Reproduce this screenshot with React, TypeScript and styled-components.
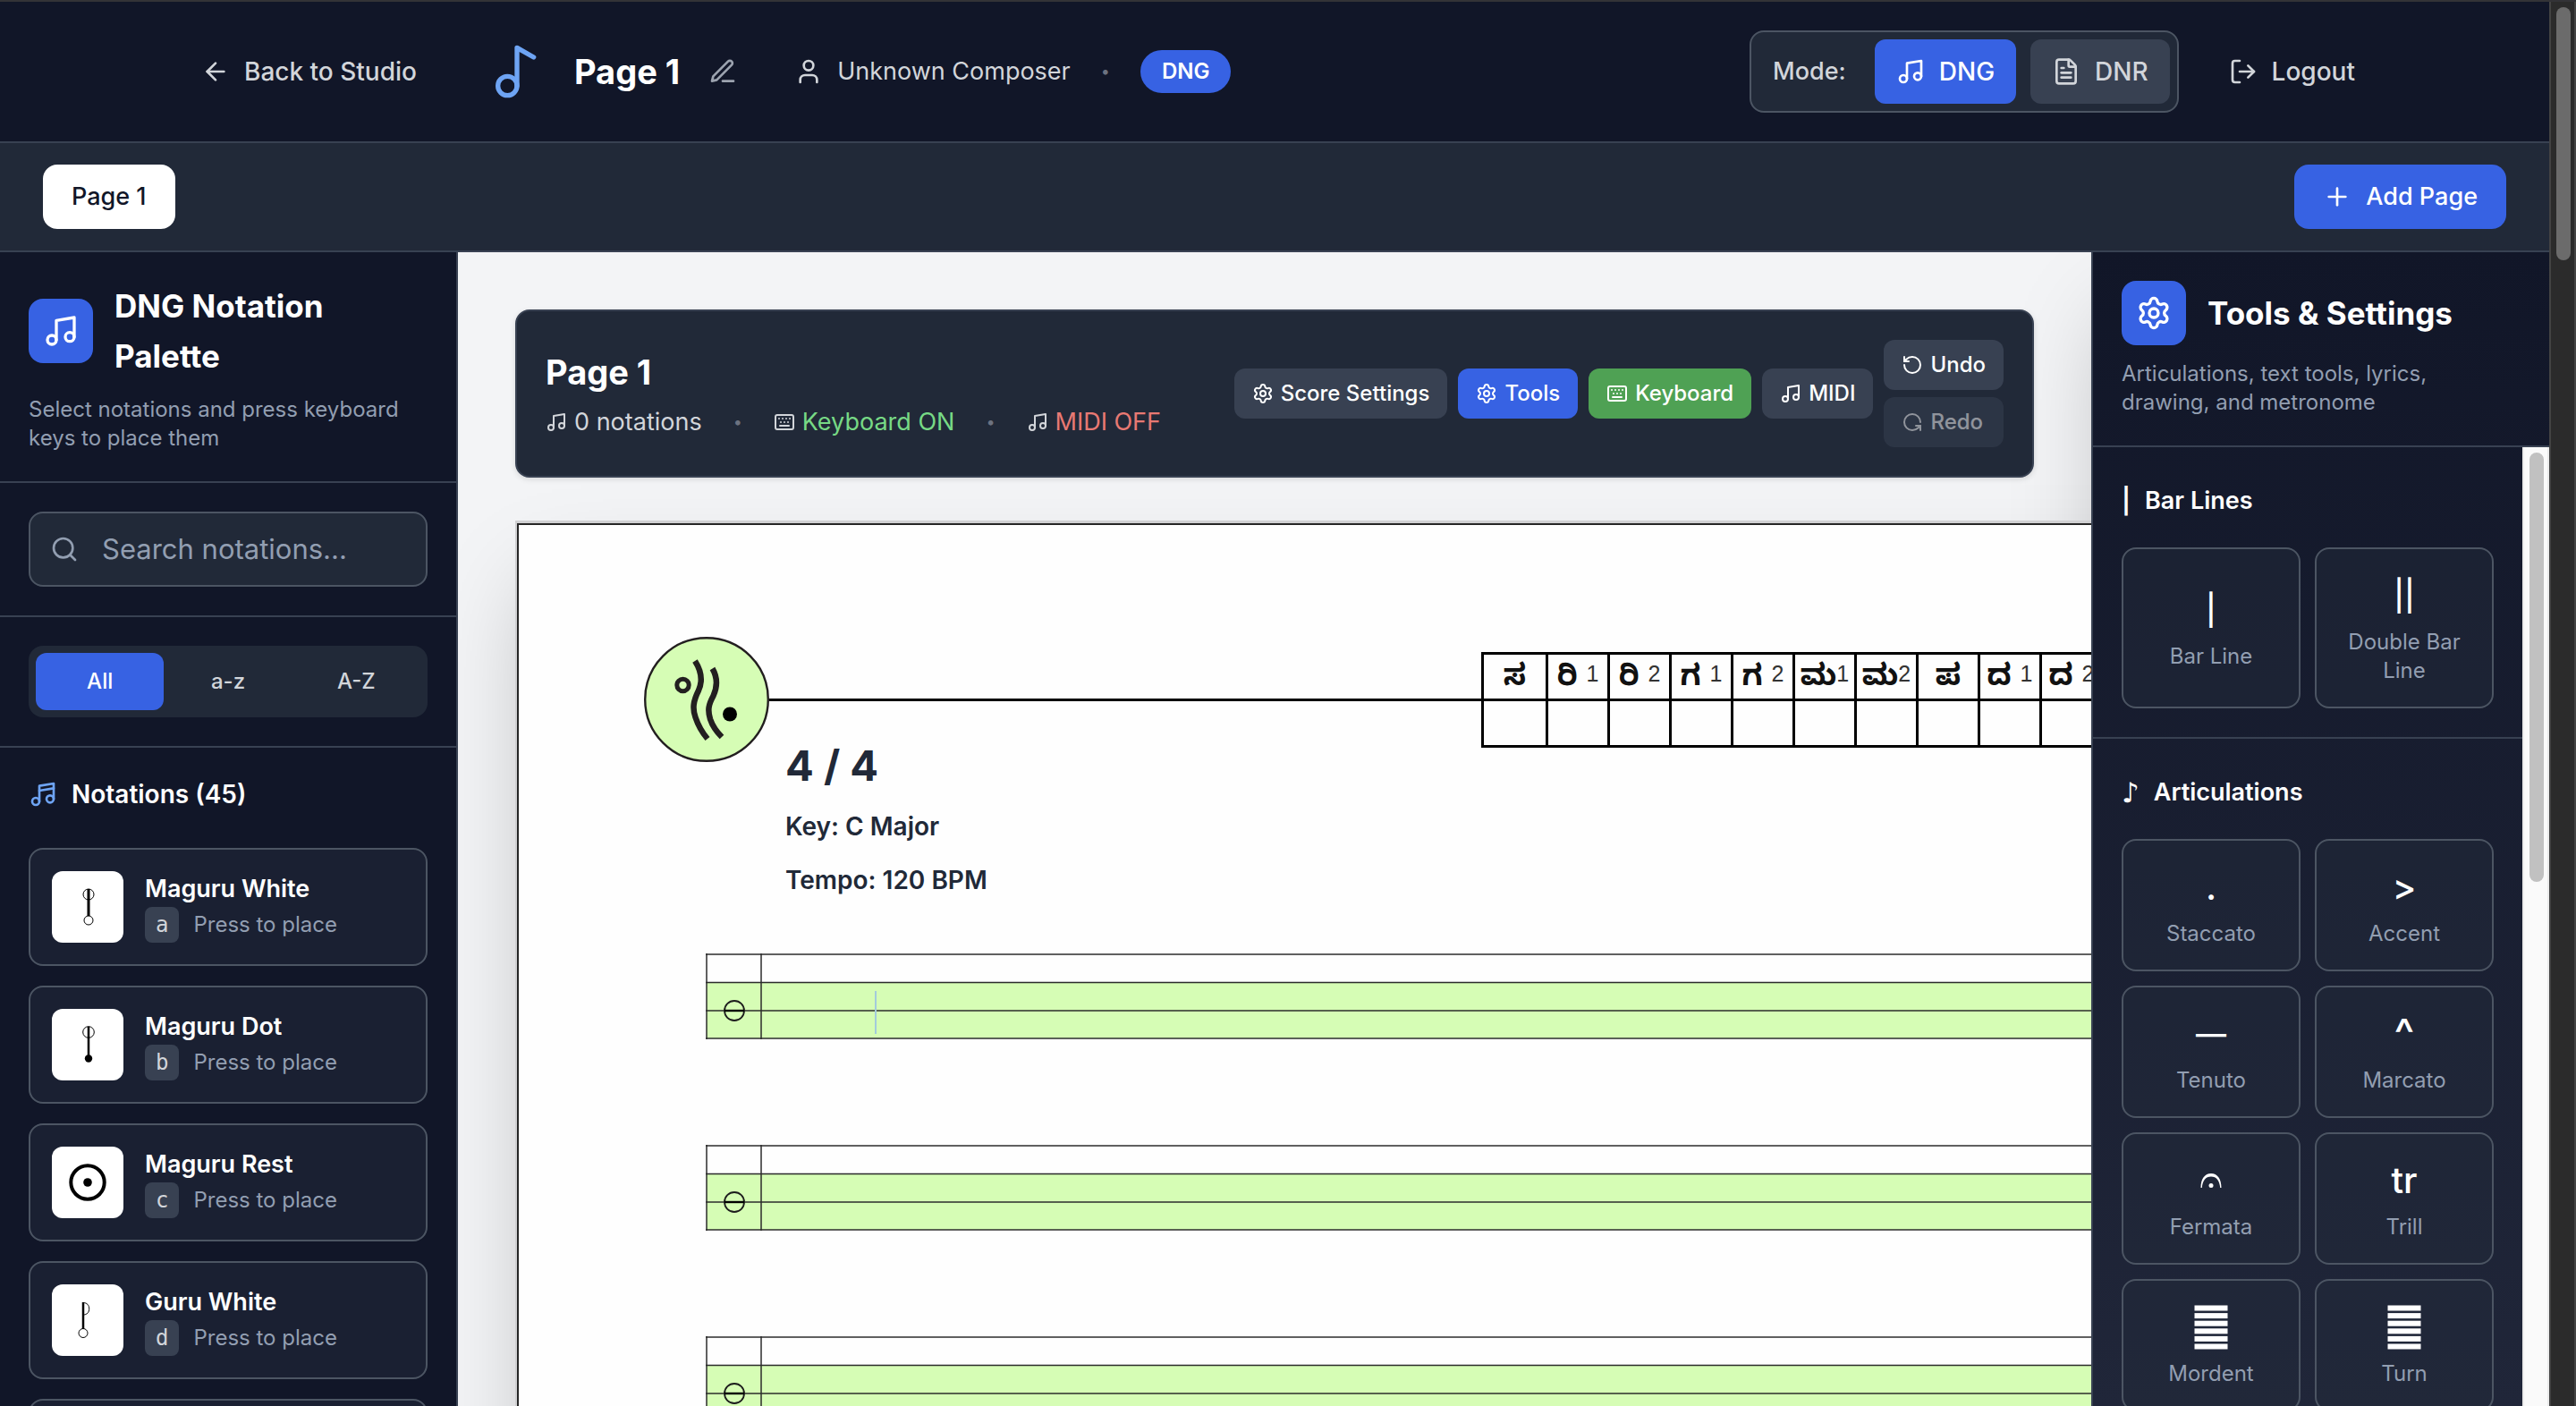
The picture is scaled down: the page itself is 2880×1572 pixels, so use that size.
import React from "react";
import styled, { createGlobalStyle, css } from "styled-components";
import {
  ArrowLeft,
  FileText,
  Keyboard,
  LogOut,
  Music,
  Music2,
  Music4,
  Plus,
  RotateCcw,
  Search,
  Settings,
  User,
} from "lucide-react";

const c = {
  night: "#111628",
  slate: "#212938",
  slateLight: "#384152",
  line: "#384152",
  outline: "#4c5563",
  blue: "#3762e3",
  sky: "#6ea4f4",
  green: "#4fa154",
  mint: "#77d985",
  coral: "#e87973",
  text: "#d2d5da",
  muted: "#9ca3af",
  mutedBlue: "#929eb1",
  faint: "#6c7280",
  white: "#ffffff",
  ink: "#212938",
  leaf: "#d6fdb5",
};

const GlobalStyle = createGlobalStyle`
  * { box-sizing: border-box; }
  body {
    margin: 0;
    background: ${c.night};
    font-family: Inter, "Noto Sans", sans-serif;
    font-size: 28px;
    line-height: 40px;
    color: ${c.white};
    -webkit-font-smoothing: antialiased;
  }
  h1, h2, h3, p { margin: 0; }
  button, input { font: inherit; color: inherit; }
  button { border: 0; background: none; padding: 0; cursor: pointer; }
  svg { flex: none; display: block; }
`;

const Window = styled.div`
  display: flex;
  height: 100vh;
  overflow: hidden;
  border-top: 2px solid #333337;
`;

const AppColumn = styled.div`
  flex: 1;
  min-width: 0;
  display: flex;
  flex-direction: column;
`;

const ScrollTrack = styled.div<{ $dark?: boolean }>`
  flex: none;
  width: 30px;
  padding: 6px;
  border: solid ${(p) => (p.$dark ? "#434343" : "#ebebeb")};
  border-width: 0 2px;
  background: ${(p) => (p.$dark ? "#2b2b2b" : "#fafafa")};
`;

const ScrollThumb = styled.div<{ $dark?: boolean; $size: number }>`
  width: 16px;
  height: ${(p) => p.$size}px;
  border-radius: 8px;
  background: ${(p) => (p.$dark ? "#6b6b6b" : "#c1c1c1")};
`;

/* ---------- header ---------- */

const Header = styled.header`
  border-bottom: 2px solid ${c.line};
`;

const HeaderInner = styled.div`
  display: flex;
  align-items: center;
  justify-content: space-between;
  max-width: 2560px;
  height: 156px;
  margin: 0 auto;
  padding: 0 56px 0 64px;
`;

const HeaderSide = styled.div<{ $gap: number }>`
  display: flex;
  align-items: center;
  gap: ${(p) => p.$gap}px;
`;

const GhostButton = styled.button`
  display: flex;
  align-items: center;
  gap: 16px;
  padding: 16px;
  font-weight: 500;
  color: ${c.text};
`;

const TitleGroup = styled.div`
  display: flex;
  align-items: center;
`;

const DocTitle = styled.h1`
  margin-left: 32px;
  font-size: 38px;
  line-height: 56px;
  font-weight: 700;
`;

const EditButton = styled.button`
  margin-left: 16px;
  padding: 16px;
  color: ${c.muted};
`;

const Byline = styled.div`
  display: flex;
  align-items: center;
  gap: 16px;
  font-size: 27px;
  color: ${c.text};
`;

const Dot = styled.span`
  font-size: 18px;
  color: ${c.faint};
`;

const Badge = styled.span`
  padding: 8px 24px;
  border-radius: 24px;
  background: ${c.blue};
  font-size: 24px;
  line-height: 32px;
  font-weight: 600;
`;

const BylineGroup = styled.div`
  display: flex;
  align-items: center;
  gap: 34px;
  margin-left: 48px;
`;

const ModeBox = styled.div`
  display: flex;
  align-items: center;
  gap: 16px;
  padding: 8px;
  border: 2px solid ${c.outline};
  border-radius: 16px;
  background: ${c.slate};
`;

const ModeLabel = styled.span`
  padding: 0 16px;
  font-size: 27px;
  font-weight: 500;
  color: ${c.text};
`;

const ModeButton = styled.button<{ $active?: boolean }>`
  display: flex;
  align-items: center;
  gap: 16px;
  padding: 16px 24px;
  border-radius: 12px;
  font-weight: 500;
  background: ${(p) => (p.$active ? c.blue : c.slateLight)};
  color: ${(p) => (p.$active ? c.white : c.text)};
`;

/* ---------- page tabs ---------- */

const TabBar = styled.nav`
  display: flex;
  justify-content: space-between;
  padding: 24px 48px;
  border-bottom: 2px solid ${c.line};
  background: ${c.slate};
`;

const TabButton = styled.button<{ $primary?: boolean }>`
  display: flex;
  align-items: center;
  gap: 16px;
  padding: 16px 32px;
  border-radius: 16px;
  font-size: 27px;
  font-weight: 500;
  background: ${(p) => (p.$primary ? c.blue : c.white)};
  color: ${(p) => (p.$primary ? c.white : c.night)};
`;

/* ---------- shared panel parts ---------- */

const Workspace = styled.div`
  flex: 1;
  min-height: 0;
  display: flex;
  overflow: hidden;
`;

const PanelHead = styled.div`
  padding: 32px;
  border-bottom: 2px solid ${c.line};
`;

const PanelTitleRow = styled.div`
  display: flex;
  align-items: center;
  gap: 24px;
  margin-bottom: 16px;
`;

const PanelIcon = styled.div`
  flex: none;
  padding: 16px;
  border-radius: 16px;
  background: ${c.blue};
`;

const PanelTitle = styled.h2`
  font-size: 35px;
  line-height: 56px;
  font-weight: 700;
`;

const PanelNote = styled.p`
  font-size: 24px;
  line-height: 32px;
  color: ${c.mutedBlue};
`;

/* ---------- left palette ---------- */

const Palette = styled.aside`
  flex: none;
  width: 512px;
  overflow: hidden;
  border-right: 2px solid ${c.line};
  background: ${c.night};
`;

const PaletteBlock = styled.div`
  padding: 32px;
  border-bottom: 2px solid ${c.line};
`;

const SearchBox = styled.label`
  display: flex;
  align-items: center;
  gap: 26px;
  height: 84px;
  padding: 0 22px;
  border: 2px solid ${c.outline};
  border-radius: 16px;
  background: ${c.slate};
  color: ${c.mutedBlue};
`;

const SearchInput = styled.input`
  flex: 1;
  min-width: 0;
  padding: 0;
  border: 0;
  outline: 0;
  background: none;
  font-size: 31px;
  color: ${c.white};
  &::placeholder { color: ${c.mutedBlue}; opacity: 1; }
`;

const Segments = styled.div`
  display: grid;
  grid-template-columns: repeat(3, 1fr);
  padding: 8px;
  border-radius: 16px;
  background: ${c.slate};
`;

const Segment = styled.button<{ $active?: boolean }>`
  padding: 16px 0;
  border-radius: 12px;
  font-size: 24px;
  line-height: 32px;
  font-weight: 500;
  color: ${(p) => (p.$active ? c.white : c.text)};
  background: ${(p) => (p.$active ? c.blue : "transparent")};
`;

const ListBlock = styled.div`
  padding: 32px;
`;

const ListTitle = styled.h3`
  display: flex;
  align-items: center;
  gap: 16px;
  margin-bottom: 40px;
  font-size: 28px;
  font-weight: 600;
  svg { color: ${c.sky}; }
`;

const NotationList = styled.div`
  display: flex;
  flex-direction: column;
  gap: 22px;
`;

const NotationCard = styled.button`
  display: flex;
  align-items: center;
  gap: 24px;
  padding: 24px;
  border: 2px solid ${c.outline};
  border-radius: 16px;
  background: #1a2032;
  text-align: left;
`;

const Thumb = styled.span`
  width: 80px;
  height: 80px;
  border-radius: 12px;
  background: ${c.white};
`;

const NotationName = styled.span`
  display: block;
  font-size: 27px;
  font-weight: 600;
`;

const NotationHint = styled.span`
  display: flex;
  align-items: center;
  gap: 16px;
  font-size: 24px;
  color: ${c.mutedBlue};
`;

const Key = styled.kbd`
  padding: 4px 12px;
  border-radius: 8px;
  background: ${c.slateLight};
  font-family: "DejaVu Sans Mono", monospace;
  font-size: 24px;
  line-height: 32px;
  color: ${c.text};
`;

/* ---------- score area ---------- */

const Stage = styled.main`
  flex: 1;
  min-width: 0;
  display: flex;
  flex-direction: column;
  gap: 48px;
  padding: 64px;
  overflow: hidden;
  background: #f3f4f6;
`;

const Toolbar = styled.section`
  position: relative;
  z-index: 1;
  display: flex;
  align-items: center;
  justify-content: space-between;
  padding: 32px;
  border: 2px solid ${c.line};
  border-radius: 16px;
  background: ${c.slate};
  box-shadow: 0 2px 6px rgba(0, 0, 0, 0.12);
`;

const ToolbarInfo = styled.div`
  display: flex;
  flex-direction: column;
  gap: 8px;
`;

const ToolbarTitle = styled.h2`
  font-size: 38px;
  line-height: 56px;
  font-weight: 700;
`;

const StatusRow = styled.div`
  display: flex;
  align-items: center;
  gap: 35px;
  font-size: 27px;
  color: ${c.text};
`;

const Status = styled.span`
  display: flex;
  align-items: center;
  gap: 8px;
`;

const StatusText = styled.span<{ $tone?: string }>`
  color: ${(p) => p.$tone ?? "inherit"};
`;

const ToolbarActions = styled.div`
  display: flex;
  align-items: center;
  gap: 12px;
`;

const History = styled.div`
  display: flex;
  flex-direction: column;
  gap: 8px;
`;

const ToolButton = styled.button<{ $tone?: string }>`
  display: flex;
  align-items: center;
  gap: 8px;
  padding: 12px 20px;
  border-radius: 12px;
  background: ${(p) => p.$tone ?? c.slateLight};
  font-size: 24px;
  line-height: 32px;
  font-weight: 500;
  white-space: nowrap;
  &:disabled { opacity: 0.5; color: ${c.white}; }
`;

const RedoIcon = styled(RotateCcw)`
  transform: rotate(180deg);
`;

const Paper = styled.section`
  position: relative;
  z-index: 1;
  flex: none;
  width: 2400px;
  min-height: 1800px;
  border: 2px solid #d0d0d2;
  border-top-width: 3px;
  background: #fefefe;
  box-shadow: 0 50px 100px -24px rgba(0, 0, 0, 0.25);
`;

const Sheet = styled.div`
  min-height: 1795px;
  padding: 125px 0 0 140px;
  border: 2px solid #262626;
  color: ${c.ink};
`;

const Masthead = styled.div`
  display: flex;
  align-items: center;
`;

const MastheadRule = styled.div`
  flex: none;
  width: 796px;
  height: 3px;
  background: #000;
`;

const SwaraTable = styled.table`
  border-collapse: collapse;
  color: #111;
  td {
    width: 69px;
    height: 52px;
    padding: 6px 0 0;
    border: 3px solid #000;
    text-align: center;
    white-space: nowrap;
    line-height: 32px;
  }
  td:first-child { width: 72px; }
`;

const Swara = styled.span`
  font-family: "Noto Sans Kannada", "Noto Sans", sans-serif;
  font-size: 33px;
  font-weight: 700;
`;

const SwaraIndex = styled.span<{ $tight?: boolean }>`
  margin-left: ${(p) => (p.$tight ? 0 : 10)}px;
  vertical-align: 4px;
  font-family: "Liberation Sans", Arial, sans-serif;
  font-size: 25px;
  line-height: 24px;
  color: #333;
`;

const ScoreMeta = styled.div`
  display: flex;
  flex-direction: column;
  gap: 20px;
  margin: -24px 0 62px 158px;
  font-weight: 600;
`;

const TimeSignature = styled.p`
  font-size: 47px;
  line-height: 56px;
  font-weight: 700;
`;

const Staves = styled.div`
  display: flex;
  flex-direction: column;
  gap: 118px;
  margin-left: 69px;
`;

const Staff = styled.div`
  position: relative;
  height: 96px;
`;

const Caret = styled.div`
  position: absolute;
  left: 189px;
  top: 42px;
  width: 2px;
  height: 48px;
  background: #a3cbdc;
`;

/* ---------- right tools ---------- */

const Tools = styled.aside`
  flex: none;
  width: 512px;
  display: flex;
  flex-direction: column;
  border-left: 2px solid ${c.line};
  background: linear-gradient(180deg, ${c.night}, #202639);
  box-shadow: 0 50px 100px -24px rgba(0, 0, 0, 0.25);
  z-index: 0;
`;

const ToolsBody = styled.div`
  flex: 1;
  min-height: 0;
  display: flex;
`;

const ToolsScroll = styled.div`
  flex: 1;
  overflow: hidden;
`;

const ToolSection = styled.section`
  padding: 32px;
  border-bottom: 2px solid ${c.line};
`;

const ToolSectionTitle = styled.h3`
  display: flex;
  align-items: center;
  gap: 16px;
  margin-bottom: 24px;
  font-size: 27px;
  line-height: 56px;
  font-weight: 600;
`;

const SectionGlyph = styled.span<{ $music?: boolean }>`
  font-size: 28px;
  ${(p) =>
    p.$music &&
    css`
      font-family: "DejaVu Sans", sans-serif;
      font-size: 31px;
    `}
`;

const ToolGrid = styled.div`
  display: grid;
  grid-template-columns: 1fr 1fr;
  gap: 16px;
`;

const ToolTile = styled.button`
  display: flex;
  flex-direction: column;
  align-items: center;
  justify-content: center;
  padding: 24px;
  border: 2px solid ${c.outline};
  border-radius: 16px;
  background: rgba(34, 41, 57, 0.5);
`;

const ToolGlyph = styled.span<{ $size?: number }>`
  display: flex;
  align-items: center;
  height: 56px;
  margin-bottom: 8px;
  font-size: ${(p) => p.$size ?? 40}px;
  line-height: 56px;
  font-weight: 500;
`;

const ToolLabel = styled.span`
  font-size: 24px;
  line-height: 32px;
  color: ${c.mutedBlue};
`;

/* ---------- drawings ---------- */

const PencilIcon = () => (
  <svg width="32" height="32" viewBox="0 0 24 24" fill="none" stroke="currentColor" strokeWidth="2" strokeLinecap="round" strokeLinejoin="round">
    <path d="M12 20h9" />
    <path d="M16.5 3.5a2.121 2.121 0 0 1 3 3L7 19l-4 1 1-4Z" />
  </svg>
);

const MaguruWhite = () => (
  <svg width="80" height="80" fill="none" stroke="#000">
    <circle cx="41" cy="26" r="6" strokeWidth="1" />
    <path d="M41 20V50" strokeWidth="3" />
    <circle cx="41" cy="55" r="5" strokeWidth="1" />
  </svg>
);

const MaguruDot = () => (
  <svg width="80" height="80" fill="none" stroke="#000">
    <circle cx="41" cy="26" r="6.3" strokeWidth="1" />
    <path d="M41 20V54" strokeWidth="2.5" />
    <circle cx="41" cy="55.5" r="4.2" fill="#000" stroke="none" />
  </svg>
);

const MaguruRest = () => (
  <svg width="80" height="80" fill="none" stroke="#000">
    <circle cx="40" cy="40" r="18.7" strokeWidth="4" />
    <circle cx="40" cy="40" r="4.8" fill="#000" stroke="none" />
  </svg>
);

const GuruWhite = () => (
  <svg width="80" height="80" fill="none" stroke="#000">
    <path d="M35 20V50" strokeWidth="2.5" />
    <path d="M35 20.5c4 0 6.7 2.6 6.7 6.8S39 34 35 34" strokeWidth="1" />
    <circle cx="35" cy="54.5" r="5" strokeWidth="1" />
  </svg>
);

const SheetLogo = () => (
  <svg width="140" height="140" viewBox="0 0 140 140" fill="none">
    <circle cx="70" cy="70" r="68.8" fill={c.leaf} stroke="#231f20" strokeWidth="2.4" />
    <path d="M57 27C64 38 65.5 50 61 60C55 72 54 80 57.5 90C60.5 99 65 107 71 114" stroke="#231f20" strokeWidth="6.5" />
    <path d="M76.5 35.5C82 45 82.5 55 77.5 66C72 76 71 82 74 92C77 101 81 106 87 112" stroke="#231f20" strokeWidth="6.5" />
    <circle cx="43.5" cy="54" r="6.7" stroke="#231f20" strokeWidth="5" />
    <circle cx="96" cy="86.5" r="8" fill="#000" />
  </svg>
);

const StaffDrawing = () => (
  <svg width="100%" height="96">
    <rect x="1" y="32" width="100%" height="63" fill={c.leaf} />
    <g stroke="#2b2b2b" strokeWidth="1.5">
      <line x1="0" x2="100%" y1="1" y2="1" />
      <line x1="0" x2="100%" y1="32.5" y2="32.5" />
      <line x1="0" x2="100%" y1="64" y2="64" />
      <line x1="0" x2="100%" y1="95" y2="95" />
      <line x1="1" x2="1" y1="0" y2="96" />
      <line x1="62" x2="62" y1="0" y2="96" />
    </g>
    <circle cx="32" cy="64" r="11" fill="none" stroke="#1d1d1d" strokeWidth="1.8" />
    <line x1="21" x2="43" y1="64" y2="64" stroke="#000" strokeWidth="2.4" />
  </svg>
);

const FermataGlyph = () => (
  <svg width="24" height="18" viewBox="0 0 24 18">
    <path d="M0.5 17C0.5 7 5 1 12 1s11.5 6 11.5 16h-1.3C21.5 9 18 4.5 12 4.5S2.5 9 1.8 17Z" fill="#fff" />
    <circle cx="12" cy="14.5" r="2.5" fill="#fff" />
  </svg>
);

const BarsGlyph = () => (
  <svg width="38" height="50" viewBox="0 0 38 50" fill="#fff">
    {[0, 1, 2, 3, 4, 5].map((i) => (
      <rect key={i} x="0.5" y={0.5 + i * 8.6} width="37" height="6" />
    ))}
  </svg>
);

/* ---------- data ---------- */

const notations = [
  { name: "Maguru White", key: "a", Art: MaguruWhite },
  { name: "Maguru Dot", key: "b", Art: MaguruDot },
  { name: "Maguru Rest", key: "c", Art: MaguruRest },
  { name: "Guru White", key: "d", Art: GuruWhite },
  { name: "Guru Dot", key: "e", Art: GuruWhite },
];

const swaras: { s: string; n?: string; tight?: boolean }[] = [
  { s: "ಸ" },
  { s: "ರಿ", n: "1" },
  { s: "ರಿ", n: "2" },
  { s: "ಗ", n: "1" },
  { s: "ಗ", n: "2" },
  { s: "ಮ", n: "1", tight: true },
  { s: "ಮ", n: "2", tight: true },
  { s: "ಪ" },
  { s: "ದ", n: "1" },
  { s: "ದ", n: "2" },
];

type Tile = { glyph: React.ReactNode; label: string; size?: number };

const barLines: Tile[] = [
  { glyph: "|", label: "Bar Line", size: 34 },
  { glyph: "||", label: "Double Bar Line", size: 34 },
];

const articulations: Tile[] = [
  { glyph: ".", label: "Staccato" },
  { glyph: ">", label: "Accent" },
  { glyph: "—", label: "Tenuto", size: 34 },
  { glyph: "^", label: "Marcato", size: 48 },
  { glyph: <FermataGlyph />, label: "Fermata" },
  { glyph: "tr", label: "Trill" },
  { glyph: <BarsGlyph />, label: "Mordent" },
  { glyph: <BarsGlyph />, label: "Turn" },
];

const Tiles = ({ items }: { items: Tile[] }) => (
  <ToolGrid>
    {items.map(({ glyph, label, size }) => (
      <ToolTile key={label}>
        <ToolGlyph $size={size}>{glyph}</ToolGlyph>
        <ToolLabel>{label}</ToolLabel>
      </ToolTile>
    ))}
  </ToolGrid>
);

export default function App() {
  return (
    <>
      <GlobalStyle />
      <Window>
        <AppColumn>
          <Header>
            <HeaderInner>
              <HeaderSide $gap={64}>
                <GhostButton>
                  <ArrowLeft size={32} />
                  Back to Studio
                </GhostButton>
                <TitleGroup>
                  <Music2 size={64} color={c.sky} />
                  <DocTitle>Page 1</DocTitle>
                  <EditButton aria-label="Edit title">
                    <PencilIcon />
                  </EditButton>
                  <BylineGroup>
                    <Byline>
                      <User size={32} />
                      Unknown Composer
                    </Byline>
                    <Dot>•</Dot>
                    <Badge>DNG</Badge>
                  </BylineGroup>
                </TitleGroup>
              </HeaderSide>
              <HeaderSide $gap={40}>
                <ModeBox>
                  <ModeLabel>Mode:</ModeLabel>
                  <ModeButton $active>
                    <Music size={32} />
                    DNG
                  </ModeButton>
                  <ModeButton>
                    <FileText size={32} />
                    DNR
                  </ModeButton>
                </ModeBox>
                <GhostButton>
                  <LogOut size={32} />
                  Logout
                </GhostButton>
              </HeaderSide>
            </HeaderInner>
          </Header>

          <TabBar>
            <TabButton>Page 1</TabButton>
            <TabButton $primary>
              <Plus size={32} />
              Add Page
            </TabButton>
          </TabBar>

          <Workspace>
            <Palette>
              <PanelHead>
                <PanelTitleRow>
                  <PanelIcon>
                    <Music size={40} />
                  </PanelIcon>
                  <PanelTitle>DNG Notation Palette</PanelTitle>
                </PanelTitleRow>
                <PanelNote>Select notations and press keyboard keys to place them</PanelNote>
              </PanelHead>
              <PaletteBlock>
                <SearchBox>
                  <Search size={32} />
                  <SearchInput type="text" aria-label="Search notations" placeholder="Search notations..." />
                </SearchBox>
              </PaletteBlock>
              <PaletteBlock>
                <Segments>
                  <Segment $active>All</Segment>
                  <Segment>a-z</Segment>
                  <Segment>A-Z</Segment>
                </Segments>
              </PaletteBlock>
              <ListBlock>
                <ListTitle>
                  <Music4 size={32} />
                  Notations (45)
                </ListTitle>
                <NotationList>
                  {notations.map(({ name, key, Art }) => (
                    <NotationCard key={key}>
                      <Thumb>
                        <Art />
                      </Thumb>
                      <span>
                        <NotationName>{name}</NotationName>
                        <NotationHint>
                          <Key>{key}</Key>
                          Press to place
                        </NotationHint>
                      </span>
                    </NotationCard>
                  ))}
                </NotationList>
              </ListBlock>
            </Palette>

            <Stage>
              <Toolbar>
                <ToolbarInfo>
                  <ToolbarTitle>Page 1</ToolbarTitle>
                  <StatusRow>
                    <Status>
                      <Music size={24} />
                      <StatusText>0 notations</StatusText>
                    </Status>
                    <Dot>•</Dot>
                    <Status>
                      <Keyboard size={24} />
                      <StatusText $tone={c.mint}>Keyboard ON</StatusText>
                    </Status>
                    <Dot>•</Dot>
                    <Status>
                      <Music size={24} />
                      <StatusText $tone={c.coral}>MIDI OFF</StatusText>
                    </Status>
                  </StatusRow>
                </ToolbarInfo>
                <ToolbarActions>
                  <ToolButton>
                    <Settings size={24} />
                    Score Settings
                  </ToolButton>
                  <ToolButton $tone={c.blue}>
                    <Settings size={24} />
                    Tools
                  </ToolButton>
                  <ToolButton $tone={c.green}>
                    <Keyboard size={24} />
                    Keyboard
                  </ToolButton>
                  <ToolButton>
                    <Music size={24} />
                    MIDI
                  </ToolButton>
                  <History>
                    <ToolButton>
                      <RotateCcw size={24} />
                      Undo
                    </ToolButton>
                    <ToolButton disabled>
                      <RedoIcon size={24} />
                      Redo
                    </ToolButton>
                  </History>
                </ToolbarActions>
              </Toolbar>

              <Paper>
                <Sheet>
                  <Masthead>
                    <SheetLogo />
                    <MastheadRule />
                    <SwaraTable>
                      <tbody>
                        <tr>
                          {swaras.map(({ s, n, tight }, i) => (
                            <td key={i}>
                              <Swara lang="kn">{s}</Swara>
                              {n && <SwaraIndex $tight={tight}>{n}</SwaraIndex>}
                            </td>
                          ))}
                        </tr>
                        <tr>
                          {swaras.map((_, i) => (
                            <td key={i} />
                          ))}
                        </tr>
                      </tbody>
                    </SwaraTable>
                  </Masthead>
                  <ScoreMeta>
                    <TimeSignature>4 / 4</TimeSignature>
                    <p>Key: C Major</p>
                    <p>Tempo: 120 BPM</p>
                  </ScoreMeta>
                  <Staves>
                    {[0, 1, 2].map((i) => (
                      <Staff key={i}>
                        <StaffDrawing />
                        {i === 0 && <Caret />}
                      </Staff>
                    ))}
                  </Staves>
                </Sheet>
              </Paper>
            </Stage>

            <Tools>
              <PanelHead>
                <PanelTitleRow>
                  <PanelIcon>
                    <Settings size={40} />
                  </PanelIcon>
                  <PanelTitle>Tools &amp; Settings</PanelTitle>
                </PanelTitleRow>
                <PanelNote>Articulations, text tools, lyrics, drawing, and metronome</PanelNote>
              </PanelHead>
              <ToolsBody>
                <ToolsScroll>
                  <ToolSection>
                    <ToolSectionTitle>
                      <SectionGlyph>|</SectionGlyph>
                      Bar Lines
                    </ToolSectionTitle>
                    <Tiles items={barLines} />
                  </ToolSection>
                  <ToolSection>
                    <ToolSectionTitle>
                      <SectionGlyph $music>♪</SectionGlyph>
                      Articulations
                    </ToolSectionTitle>
                    <Tiles items={articulations} />
                  </ToolSection>
                </ToolsScroll>
                <ScrollTrack>
                  <ScrollThumb $size={480} />
                </ScrollTrack>
              </ToolsBody>
            </Tools>
          </Workspace>
        </AppColumn>
        <ScrollTrack $dark>
          <ScrollThumb $dark $size={283} />
        </ScrollTrack>
      </Window>
    </>
  );
}
